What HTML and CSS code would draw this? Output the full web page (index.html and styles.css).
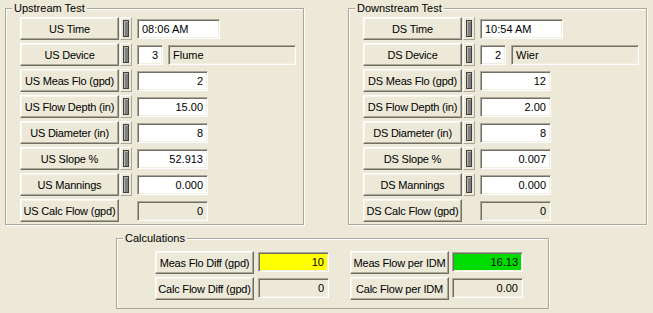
FILE: index.html
```html
<!DOCTYPE html>
<html lang="en">
<head>
  <meta charset="UTF-8">
  <title>Flow Test</title>
  <link rel="stylesheet" href="styles.css">
</head>
<body>
  <div class="form">
    <div class="top">
      <div class="group">
        <span class="legend">Upstream Test</span>
        <div class="row"><button class="btn">US Time</button><span class="toggle"><span class="thumb"></span></span><span class="field time left">08:06 AM</span></div>
        <div class="row"><button class="btn">US Device</button><span class="toggle"><span class="thumb"></span></span><span class="field num">3</span><span class="field name left readonly">Flume</span></div>
        <div class="row"><button class="btn">US Meas Flo (gpd)</button><span class="toggle"><span class="thumb"></span></span><span class="field">2</span></div>
        <div class="row"><button class="btn">US Flow Depth (in)</button><span class="toggle"><span class="thumb"></span></span><span class="field">15.00</span></div>
        <div class="row"><button class="btn">US Diameter (in)</button><span class="toggle"><span class="thumb"></span></span><span class="field">8</span></div>
        <div class="row"><button class="btn">US Slope %</button><span class="toggle"><span class="thumb"></span></span><span class="field">52.913</span></div>
        <div class="row"><button class="btn">US Mannings</button><span class="toggle"><span class="thumb"></span></span><span class="field">0.000</span></div>
        <div class="row"><button class="btn">US Calc Flow (gpd)</button><span class="spacer"></span><span class="field readonly">0</span></div>
      </div>

      <div class="group">
        <span class="legend">Downstream Test</span>
        <div class="row"><button class="btn">DS Time</button><span class="toggle"><span class="thumb"></span></span><span class="field time left">10:54 AM</span></div>
        <div class="row"><button class="btn">DS Device</button><span class="toggle"><span class="thumb"></span></span><span class="field num">2</span><span class="field name left readonly">Wier</span></div>
        <div class="row"><button class="btn">DS Meas Flo (gpd)</button><span class="toggle"><span class="thumb"></span></span><span class="field">12</span></div>
        <div class="row"><button class="btn">DS Flow Depth (in)</button><span class="toggle"><span class="thumb"></span></span><span class="field">2.00</span></div>
        <div class="row"><button class="btn">DS Diameter (in)</button><span class="toggle"><span class="thumb"></span></span><span class="field">8</span></div>
        <div class="row"><button class="btn">DS Slope %</button><span class="toggle"><span class="thumb"></span></span><span class="field">0.007</span></div>
        <div class="row"><button class="btn">DS Mannings</button><span class="toggle"><span class="thumb"></span></span><span class="field">0.000</span></div>
        <div class="row"><button class="btn">DS Calc Flow (gpd)</button><span class="spacer"></span><span class="field readonly">0</span></div>
      </div>
    </div>

    <div class="group calc">
      <span class="legend">Calculations</span>
      <div class="row">
        <button class="btn">Meas Flo Diff (gpd)</button><span class="field yellow">10</span>
        <button class="btn second">Meas Flow per IDM</button><span class="field green">16.13</span>
      </div>
      <div class="row">
        <button class="btn">Calc Flow Diff (gpd)</button><span class="field readonly">0</span>
        <button class="btn second">Calc Flow per IDM</button><span class="field readonly">0.00</span>
      </div>
    </div>
  </div>
</body>
</html>
```

FILE: styles.css
```css
body {
  margin: 0;
  background: #ece9d8;
  color: #000;
  font-family: "Liberation Sans", Arial, sans-serif;
  font-size: 11px;
}

.form {
  padding: 8px 0 0 5px;
}

.top {
  display: flex;
  gap: 44px;
}

/* etched group box */
.group {
  position: relative;
  box-sizing: border-box;
  width: 299px;
  border: 1px solid #aca899;
  box-shadow: inset 1px 1px #fff, 1px 1px #fff;
  padding: 8px 0 2px 14px;
  display: flex;
  flex-direction: column;
  gap: 3px;
}

.legend {
  position: absolute;
  top: -7px;
  left: 6px;
  padding: 0 2px;
  background: #ece9d8;
  line-height: 13px;
}

.row {
  display: flex;
  align-items: flex-start;
  height: 23px;
}

.btn {
  box-sizing: border-box;
  width: 99px;
  height: 23px;
  margin: 0 1px 0 0;
  padding: 0;
  font: inherit;
  letter-spacing: -0.2px;
  color: #000;
  background: #ece9d8;
  border: 1px solid;
  border-color: #fff #716f64 #716f64 #fff;
  box-shadow: inset -1px -1px #aca899, inset 1px 1px #f6f5ee;
  white-space: nowrap;
}

.toggle {
  box-sizing: border-box;
  width: 12px;
  height: 23px;
  margin-right: 5px;
  padding: 2px;
  border: 1px solid;
  border-color: #fff #aca899 #aca899 #fff;
}

.thumb {
  display: block;
  box-sizing: border-box;
  height: 100%;
  background: #808080;
  border: 1px solid #404040;
  box-shadow: inset 1px 1px #b8b6a8;
}

.spacer {
  width: 17px;
}

.field {
  box-sizing: border-box;
  width: 71px;
  height: 20px;
  margin-top: 2px;
  padding: 0 4px;
  background: #fff;
  border: 1px solid;
  border-color: #aca899 #fff #fff #aca899;
  box-shadow: inset 1px 1px #716f64, inset -1px -1px #f1efe2;
  line-height: 18px;
  text-align: right;
  white-space: nowrap;
}

.field.left {
  text-align: left;
  padding-left: 4px;
}

.field.time {
  width: 83px;
}

.field.num {
  width: 26px;
  margin-right: 5px;
}

.field.name {
  width: 128px;
}

.field.readonly {
  background: #ece9d8;
}

.field.yellow {
  background: #ffff00;
}

.field.green {
  background: #00dc00;
}

.calc {
  width: 433px;
  margin: 13px 0 0 111px;
  padding: 12px 0 8px 38px;
}

.calc .btn {
  margin-right: 4px;
}

.calc .field {
  margin-top: 1px;
}

.calc .btn.second {
  margin-left: 21px;
  margin-right: 3px;
}
```
